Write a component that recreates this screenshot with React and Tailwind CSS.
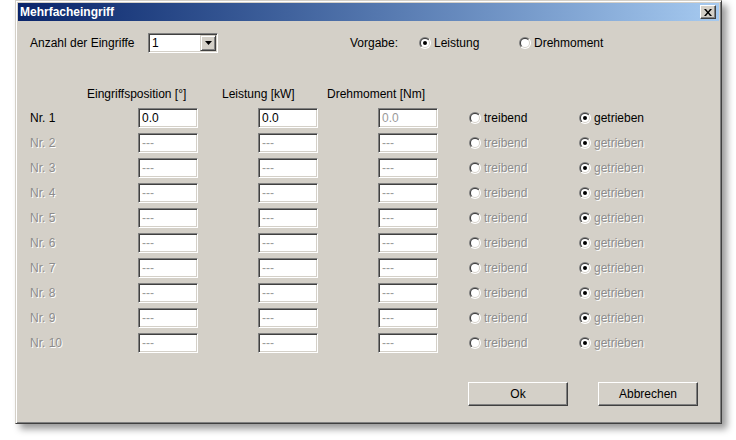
import React from "react";

const Radio = ({ checked }) => (
  <svg width="12" height="12" viewBox="0 0 12 12" className="shrink-0">
    <defs>
      <linearGradient id="rgOut" x1="0" y1="0" x2="1" y2="1">
        <stop offset="0.5" stopColor="#808080" />
        <stop offset="0.5" stopColor="#ffffff" />
      </linearGradient>
      <linearGradient id="rgIn" x1="0" y1="0" x2="1" y2="1">
        <stop offset="0.5" stopColor="#404040" />
        <stop offset="0.5" stopColor="#d4d0c8" />
      </linearGradient>
    </defs>
    <circle cx="6" cy="6" r="6" fill="url(#rgOut)" />
    <circle cx="6" cy="6" r="5" fill="url(#rgIn)" />
    <circle cx="6" cy="6" r="4" fill="#ffffff" />
    {checked && <circle cx="6" cy="6" r="2" fill="#000000" />}
  </svg>
);

const RadioOpt = ({ checked, label, disabled, className = "" }) => (
  <div className={`flex items-center gap-[3px] ${className}`}>
    <Radio checked={checked} />
    <span
      className={
        disabled
          ? "text-[#8c8c8c] [text-shadow:1px_1px_0_#ffffff]"
          : "text-black"
      }
    >
      {label}
    </span>
  </div>
);

const Field = ({ value, dim, className = "" }) => (
  <div
    className={`h-[20px] w-[60px] shrink-0 border border-t-[#808080] border-l-[#808080] border-b-white border-r-white bg-white shadow-[inset_1px_1px_0_#404040,inset_-1px_-1px_0_#d4d0c8] pl-[3px] leading-[18px] ${
      dim ? "text-[#9a9a9a]" : "text-black"
    } ${className}`}
  >
    {value}
  </div>
);

const Button = ({ children, className = "" }) => (
  <div
    className={`flex h-[24px] w-[100px] items-center justify-center border border-t-white border-l-white border-b-[#404040] border-r-[#404040] bg-[#d4d0c8] shadow-[inset_-1px_-1px_0_#808080] text-black ${className}`}
  >
    {children}
  </div>
);

export default function App() {
  const rows = Array.from({ length: 10 }, (_, i) => i + 1);
  return (
    <div className="h-[440px] w-[736px] bg-white pl-[15px] font-['Liberation_Sans',Arial,sans-serif] text-[12px]">
      <div className="flex h-[424px] w-[707px] flex-col border border-t-[#d4d0c8] border-l-[#d4d0c8] border-b-[#404040] border-r-[#404040] bg-[#d4d0c8] p-[2px] shadow-[inset_1px_1px_0_#ffffff,inset_-1px_-1px_0_#808080,5px_5px_7px_rgba(0,0,0,0.4)]">
        {/* Title bar */}
        <div className="flex h-[18px] items-center justify-between bg-gradient-to-r from-[#0a246a] to-[#a6caf0] pl-[2px] pr-[3px]">
          <span className="font-bold text-white">Mehrfacheingriff</span>
          <div className="flex h-[14px] w-[16px] items-center justify-center border border-t-white border-l-white border-b-[#404040] border-r-[#404040] bg-[#d4d0c8] shadow-[inset_-1px_-1px_0_#808080]">
            <svg width="8" height="7" viewBox="0 0 8 7">
              <path d="M0 0h2l2 2.5L6 0h2L5 3.5 8 7H6L4 4.5 2 7H0l3-3.5z" fill="#000" />
            </svg>
          </div>
        </div>

        {/* Body */}
        <div className="flex flex-col">
          {/* Top row */}
          <div className="mt-[12px] flex h-[20px] items-center pl-[12px]">
            <span className="w-[118px] shrink-0">Anzahl der Eingriffe</span>
            <div className="flex h-[20px] w-[70px] shrink-0 items-center border border-t-[#808080] border-l-[#808080] border-b-white border-r-white bg-white shadow-[inset_1px_1px_0_#404040,inset_-1px_-1px_0_#d4d0c8] p-[1px]">
              <span className="flex-1 pl-[2px] leading-[16px]">1</span>
              <div className="flex h-[16px] w-[16px] items-center justify-center border border-t-[#d4d0c8] border-l-[#d4d0c8] border-b-[#404040] border-r-[#404040] bg-[#d4d0c8] shadow-[inset_1px_1px_0_#ffffff,inset_-1px_-1px_0_#808080]">
                <svg width="7" height="4" viewBox="0 0 7 4">
                  <path d="M0 0h7L3.5 4z" fill="#000" />
                </svg>
              </div>
            </div>
            <span className="ml-[132px] w-[69px] shrink-0">Vorgabe:</span>
            <RadioOpt checked label="Leistung" className="w-[100px] shrink-0" />
            <RadioOpt label="Drehmoment" />
          </div>

          {/* Headers */}
          <div className="mt-[34px] flex h-[14px] items-center pl-[69px] leading-[14px]">
            <span className="w-[135px] shrink-0">Eingriffsposition [°]</span>
            <span className="w-[105px] shrink-0">Leistung [kW]</span>
            <span>Drehmoment [Nm]</span>
          </div>

          {/* Rows */}
          <div className="mt-[7px] flex flex-col gap-[5px]">
            {rows.map((n) => {
              const first = n === 1;
              const dis = !first;
              return (
                <div key={n} className="flex h-[20px] items-center pl-[12px]">
                  <span
                    className={`w-[108px] shrink-0 ${
                      dis
                        ? "text-[#8c8c8c] [text-shadow:1px_1px_0_#ffffff]"
                        : "text-black"
                    }`}
                  >
                    Nr. {n}
                  </span>
                  <Field value={first ? "0.0" : "---"} dim={dis} />
                  <Field value={first ? "0.0" : "---"} dim={dis} className="ml-[60px]" />
                  <Field value={first ? "0.0" : "---"} dim className="ml-[60px]" />
                  <RadioOpt
                    label="treibend"
                    disabled={dis}
                    className="ml-[31px] w-[110px] shrink-0"
                  />
                  <RadioOpt checked label="getrieben" disabled={dis} />
                </div>
              );
            })}
          </div>

          {/* Buttons */}
          <div className="mt-[29px] flex gap-[30px] pl-[450px]">
            <Button>Ok</Button>
            <Button>Abbrechen</Button>
          </div>
        </div>
      </div>
    </div>
  );
}
